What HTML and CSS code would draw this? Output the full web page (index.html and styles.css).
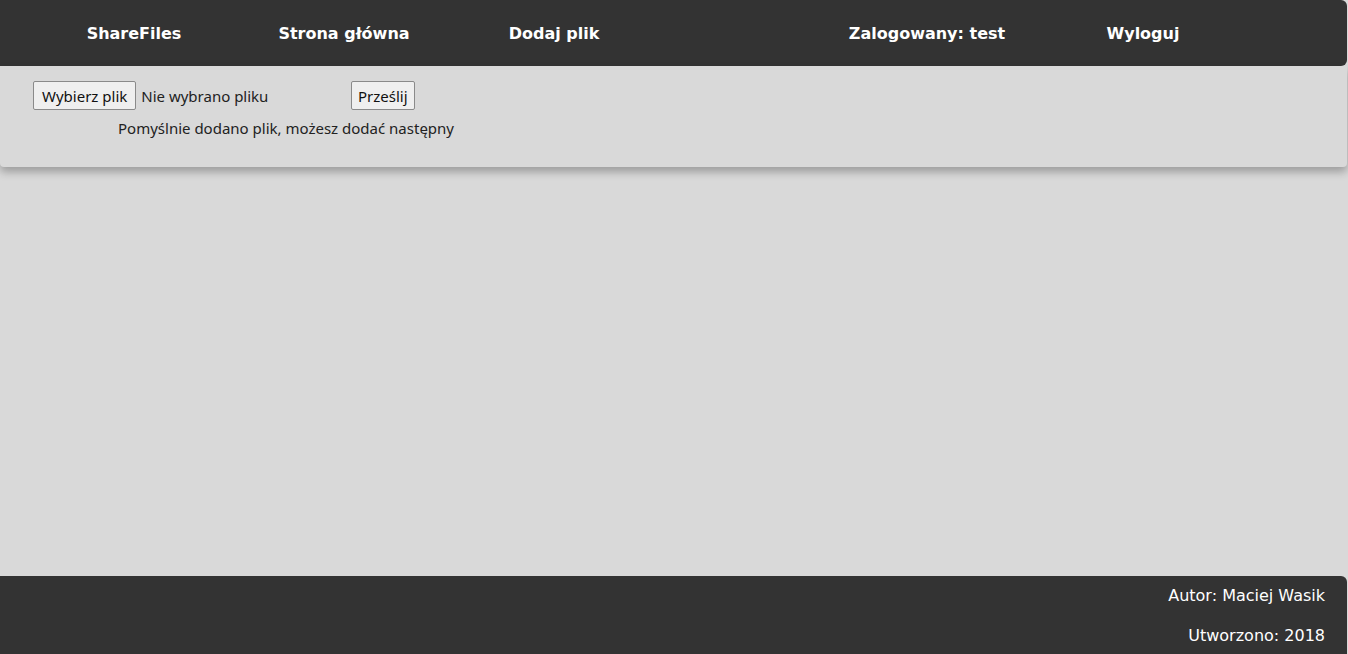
FILE: index.html
```html
<!DOCTYPE html>
<html lang="pl">
<head>
<meta charset="utf-8">
<title>ShareFiles</title>
<link rel="stylesheet" href="styles.css">
</head>
<body>
<div class="page">
  <header class="topbar">
    <nav class="nav">
      <span class="nav-pad"></span>
      <a class="nav-item">ShareFiles</a>
      <a class="nav-item">Strona główna</a>
      <a class="nav-item">Dodaj plik</a>
      <span class="nav-gap"></span>
      <a class="nav-item nav-wide">Zalogowany: test</a>
      <a class="nav-item nav-wide">Wyloguj</a>
    </nav>
  </header>
  <section class="panel">
    <form class="upload">
      <div class="upload-row">
        <span class="file-pick"><button type="button" class="btn btn-pick">Wybierz plik</button><span class="file-name">Nie wybrano pliku</span></span>
        <button type="button" class="btn">Prześlij</button>
      </div>
      <p class="msg">Pomyślnie dodano plik, możesz dodać następny</p>
    </form>
  </section>
  <main class="content"></main>
  <footer class="footer">
    <p class="foot-line">Autor: Maciej Wasik</p>
    <p class="foot-line">Utworzono: 2018</p>
  </footer>
</div>
</body>
</html>
```
FILE: styles.css
```css
html, body {
  margin: 0;
  padding: 0;
  background: #d9d9d9;
}
body {
  font-family: "Noto Sans", "Open Sans", sans-serif;
}
.page {
  width: 1347px;
  height: 654px;
  display: flex;
  flex-direction: column;
}
.topbar {
  background: #333333;
  height: 66px;
  border-radius: 0 6px 6px 0;
  display: flex;
  align-items: center;
}
.nav {
  display: grid;
  grid-template-columns: 29px 210px 210px 210px 160px 216px 216px;
  width: 100%;
}
.nav-item {
  color: #ffffff;
  font-family: "DejaVu Sans", sans-serif;
  font-weight: bold;
  font-size: 16px;
  text-align: center;
  text-decoration: none;
}
.panel {
  height: 101px;
  background: #d9d9d9;
  border-radius: 0 0 4px 4px;
  box-shadow: 0 5px 8px rgba(0, 0, 0, 0.28);
  position: relative;
  z-index: 1;
  box-sizing: border-box;
  padding: 15px 0 0 33px;
}
.upload-row {
  display: flex;
  align-items: center;
  height: 29px;
}
.file-pick {
  display: flex;
  align-items: center;
  width: 318px;
}
.btn {
  font-family: "Noto Sans", "Open Sans", sans-serif;
  font-size: 15px;
  color: #111;
  background: #efefef;
  border: 1px solid #8a8a8a;
  border-radius: 2px;
  height: 29px;
  padding: 0 6px;
  margin: 0;
}
.btn-pick {
  padding: 0 8px;
}
.file-name {
  font-size: 15px;
  color: #222;
  margin-left: 5px;
}
.msg {
  margin: 7px 0 0 85px;
  font-size: 15px;
  color: #222;
  line-height: 22px;
}
.content {
  flex: 1;
}
.footer {
  background: #333333;
  height: 78px;
  border-radius: 0 6px 0 0;
  box-sizing: border-box;
  padding: 9px 22px 0 0;
  color: #ffffff;
  text-align: right;
  font-family: "DejaVu Sans", sans-serif;
  font-size: 16px;
}
.foot-line {
  margin: 0;
  height: 40px;
  line-height: 22px;
}
```
